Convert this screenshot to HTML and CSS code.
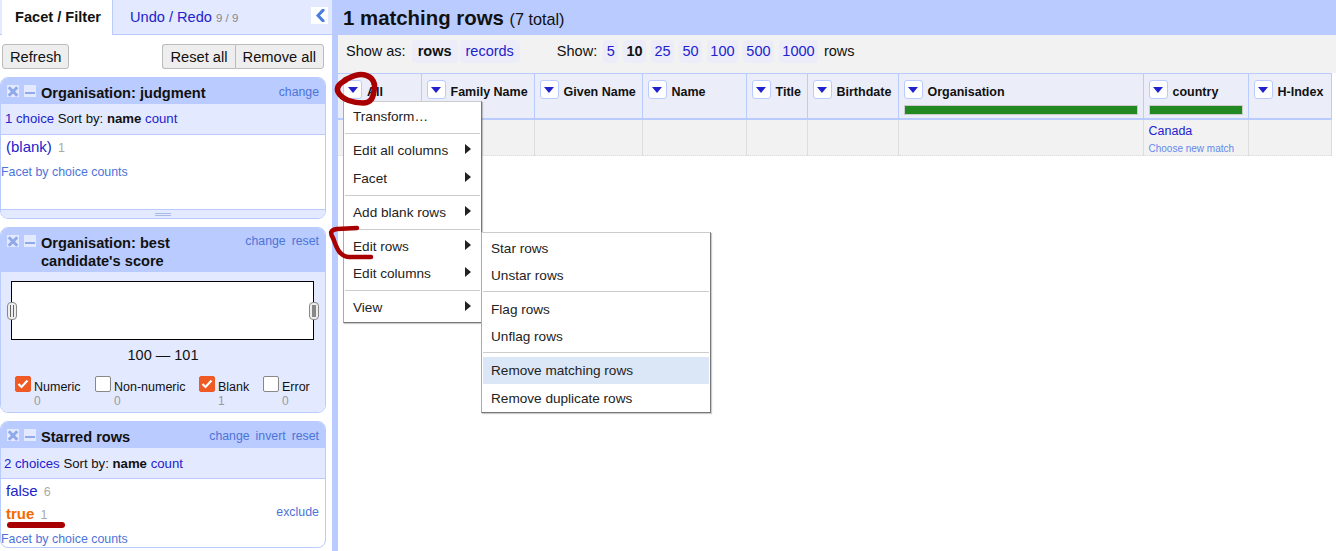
FILE: index.html
```html
<!DOCTYPE html>
<html lang="en">
<head>
  <meta charset="UTF-8">
  <title>OpenRefine</title>
  <link rel="stylesheet" href="styles.css">
</head>
<body>
  <div class="app">
    <aside class="left">
      <div class="tabs">
        <div class="tab active">Facet / Filter</div>
        <div class="tab">Undo / Redo <span class="undo-count">9 / 9</span></div>
        <div class="collapse">
          <svg width="17" height="17" viewBox="0 0 17 17"><path d="M11 2 L5 8.5 L11 15 L13.5 15 L13.5 13 L9 8.5 L13.5 4 L13.5 2 Z" fill="#4a7de0"/></svg>
        </div>
      </div>
      <div class="toolbar">
        <button class="btn">Refresh</button>
        <div class="btn-group">
          <button class="btn">Reset all</button>
          <button class="btn">Remove all</button>
        </div>
      </div>

      <section class="facet facet-judgment">
        <header class="facet-head">
          <span class="icon-x"></span><span class="icon-min"></span>
          <div class="facet-title">Organisation: judgment</div>
          <div class="facet-links"><a>change</a></div>
        </header>
        <div class="facet-controls"><a class="blue">1 choice</a> Sort by: <b>name</b> <a class="blue">count</a></div>
        <div class="facet-body tall">
          <div class="choice"><a class="blue">(blank)</a> <span class="count">1</span></div>
          <a class="by-counts">Facet by choice counts</a>
        </div>
        <div class="resize"><span></span></div>
      </section>

      <section class="facet facet-score">
        <header class="facet-head two-line">
          <span class="icon-x"></span><span class="icon-min"></span>
          <div class="facet-title">Organisation: best<br>candidate's score</div>
          <div class="facet-links"><a>change</a><a>reset</a></div>
        </header>
        <div class="range-body">
          <div class="histogram">
            <span class="handle handle-l"></span>
            <span class="handle handle-r"></span>
          </div>
          <div class="range-label">100 — 101</div>
          <div class="checks">
            <div class="check c1"><span class="box on"><svg width="16" height="16" viewBox="0 0 16 16"><path d="M3.5 8 L6.5 11 L12.5 4.5" fill="none" stroke="#fff" stroke-width="2.2"/></svg></span><span class="check-text">Numeric<i>0</i></span></div>
            <div class="check c2"><span class="box"></span><span class="check-text">Non-numeric<i>0</i></span></div>
            <div class="check c3"><span class="box on"><svg width="16" height="16" viewBox="0 0 16 16"><path d="M3.5 8 L6.5 11 L12.5 4.5" fill="none" stroke="#fff" stroke-width="2.2"/></svg></span><span class="check-text">Blank<i>1</i></span></div>
            <div class="check c4"><span class="box"></span><span class="check-text">Error<i>0</i></span></div>
          </div>
        </div>
      </section>

      <section class="facet facet-starred">
        <header class="facet-head">
          <span class="icon-x"></span><span class="icon-min"></span>
          <div class="facet-title">Starred rows</div>
          <div class="facet-links"><a>change</a><a>invert</a><a>reset</a></div>
        </header>
        <div class="facet-controls"><a class="blue">2 choices</a> Sort by: <b>name</b> <a class="blue">count</a></div>
        <div class="facet-body">
          <div class="choice"><a class="blue">false</a> <span class="count">6</span></div>
          <div class="choice selected"><a class="picked">true</a> <span class="count">1</span><a class="exclude">exclude</a></div>
          <a class="by-counts">Facet by choice counts</a>
        </div>
      </section>
    </aside>

    <main class="right">
      <div class="summary"><b>1 matching rows</b> <span>(7 total)</span></div>
      <div class="viewbar">
        <span class="label">Show as:</span>
        <span class="pill wide current">rows</span><a class="pill wide blue">records</a>
        <span class="label show-label">Show:</span>
        <a class="pill blue">5</a><span class="pill current">10</span><a class="pill blue">25</a><a class="pill blue">50</a><a class="pill blue">100</a><a class="pill blue">500</a><a class="pill blue">1000</a>
        <span class="label rows-label">rows</span>
      </div>
      <table class="grid">
        <colgroup>
          <col class="w83"><col class="w113"><col class="w108"><col class="w104"><col class="w61"><col class="w91"><col class="w245"><col class="w105"><col class="w83">
        </colgroup>
        <thead>
          <tr>
            <th><span class="drop"></span>All</th>
            <th><span class="drop"></span>Family Name</th>
            <th><span class="drop"></span>Given Name</th>
            <th><span class="drop"></span>Name</th>
            <th><span class="drop"></span>Title</th>
            <th><span class="drop"></span>Birthdate</th>
            <th><span class="drop"></span>Organisation<div class="recon-bar"></div></th>
            <th><span class="drop"></span>country<div class="recon-bar"></div></th>
            <th><span class="drop"></span>H-Index</th>
          </tr>
        </thead>
        <tbody>
          <tr>
            <td></td><td></td><td></td><td></td><td></td><td></td><td></td>
            <td><a class="blue">Canada</a><a class="new-match">Choose new match</a></td>
            <td></td>
          </tr>
        </tbody>
      </table>
    </main>
  </div>

  <div class="menu main-menu">
    <div class="item">Transform…</div>
    <hr>
    <div class="item sub">Edit all columns</div>
    <div class="item sub facet-item">Facet</div>
    <hr>
    <div class="item sub">Add blank rows</div>
    <hr>
    <div class="item sub">Edit rows</div>
    <div class="item sub">Edit columns</div>
    <hr>
    <div class="item sub">View</div>
  </div>
  <div class="menu sub-menu">
    <div class="item">Star rows</div>
    <div class="item">Unstar rows</div>
    <hr>
    <div class="item">Flag rows</div>
    <div class="item">Unflag rows</div>
    <hr>
    <div class="item hover">Remove matching rows</div>
    <div class="item dup">Remove duplicate rows</div>
  </div>

  <svg class="scribble" width="1336" height="551" viewBox="0 0 1336 551">
    <g fill="none" stroke="#a80000" stroke-linecap="round" stroke-linejoin="round">
      <path stroke-width="5.5" d="M345 80 C351 77 358 73 365 75 C373 77 376 84 374 91 C373 98 371 103 363 103 C354 103 342 100 338 92 C336 87 340 83 346 80"/>
      <path stroke-width="4.5" d="M357 228 L337 229 C330 230 330 233 333 238 C336 245 338 256 349 257 L371 257"/>
      <path stroke-width="6" d="M10 525 L62 525"/>
    </g>
  </svg>
</body>
</html>
```
FILE: styles.css
```css
* { box-sizing: border-box; }
html, body {
  margin: 0;
  height: 100%;
  overflow: hidden;
}
body {
  font-family: "Liberation Sans", Arial, sans-serif;
  font-size: 13px;
  color: #111;
  background: #fff;
}
a { cursor: pointer; }
.blue { color: #2222cc; }

.app {
  display: flex;
  height: 551px;
}

/* left panel */
.left {
  width: 332px;
  flex: none;
  padding-right: 6px;
}
.tabs {
  display: flex;
  height: 35px;
  margin-right: -6px;
  background: #e3e9ff;
  border-bottom: 1px solid #b9cbff;
  position: relative;
}
.tab {
  padding-top: 9px;
  font-size: 14.6px;
  color: #2222cc;
  padding-left: 17px;
}
.tab.active {
  width: 111px;
  height: 35px;
  margin-left: 2px;
  padding-left: 13px;
  background: #fff;
  color: #111;
  font-weight: bold;
  border-right: 1px solid #b9cbff;
}
.undo-count { font-size: 11.5px; color: #888; }
.collapse {
  position: absolute;
  top: 7px;
  left: 311px;
  width: 17px;
  height: 17px;
  background: #fff;
}
.toolbar {
  display: flex;
  justify-content: space-between;
  padding: 9px 2px 0 2px;
  height: 42px;
}
.btn-group { display: flex; }
.btn {
  height: 25px;
  padding: 0 7px;
  font-family: inherit;
  font-size: 14.7px;
  color: #111;
  background: #eee;
  border: 1px solid #bbb;
  border-radius: 3px;
}
.btn-group .btn:first-child { border-radius: 3px 0 0 3px; border-right: none; }
.btn-group .btn:last-child { border-radius: 0 3px 3px 0; }

.facet {
  margin-bottom: 8px;
  border: 1px solid #b9cbff;
  border-radius: 8px;
  overflow: hidden;
  background: #fff;
}
.facet-head {
  display: flex;
  background: #b9cbff;
  min-height: 26px;
  padding: 6px 6px 0 6px;
}
.facet-head.two-line { height: 44px; }
.icon-x, .icon-min {
  flex: none;
  width: 12px;
  height: 12px;
  margin-right: 5px;
  margin-top: 1px;
  background: #e3e9ff;
  position: relative;
}
.icon-x::before, .icon-x::after {
  content: "";
  position: absolute;
  left: 0;
  top: 4.5px;
  width: 12px;
  height: 3px;
  background: #8fa9ea;
  transform: rotate(45deg);
}
.icon-x::after { transform: rotate(-45deg); }
.icon-min::before {
  content: "";
  position: absolute;
  left: 1px;
  top: 7px;
  width: 10px;
  height: 2px;
  background: #8fa9ea;
}
.facet-title {
  flex: 1;
  font-size: 14.6px;
  font-weight: bold;
  line-height: 18px;
  color: #111;
}
.facet-links {
  font-size: 12.3px;
  color: #4d74d9;
  line-height: 15px;
  padding-top: 1px;
  white-space: nowrap;
}
.two-line .facet-links { padding-top: 0; }
.facet-links a { margin-left: 6px; }
.facet-controls {
  height: 31px;
  padding: 7px 3px 0 3px;
  background: #e3e9ff;
  border-bottom: 1px solid #b9cbff;
  font-size: 13.2px;
  line-height: 15px;
}
.facet-judgment .facet-controls { padding-left: 4px; }
.facet-starred .facet-controls { padding-top: 8px; }
.facet-body { position: relative; height: 68px; }
.facet-body.tall { height: 74px; }
.choice {
  font-size: 15px;
  padding: 3px 5px 0 5px;
  height: 23px;
  position: relative;
}
.facet-judgment .choice { height: 30px; }
.count { font-size: 12.5px; color: #aaa; margin-left: 2px; }
.picked { color: #f26a00; font-weight: bold; }
.exclude {
  position: absolute;
  right: 6px;
  top: 3px;
  font-size: 12.4px;
  color: #4d74d9;
}
.by-counts {
  display: block;
  font-size: 12.4px;
  color: #4d74d9;
}
.facet-starred .by-counts { margin-top: 7px; }
.resize {
  height: 9px;
  background: #e3e9ff;
  border-top: 1px solid #b9cbff;
  display: flex;
  justify-content: center;
  padding-top: 3px;
}
.resize span {
  width: 16px;
  height: 3px;
  border-top: 1px solid #a9b9e3;
  border-bottom: 1px solid #a9b9e3;
}

.range-body {
  background: #e3e9ff;
  height: 140px;
  padding: 9px 0 0 0;
}
.histogram {
  position: relative;
  height: 59px;
  margin: 0 10px;
  width: 303px;
  background: #fff;
  border: 1px solid #000;
}
.handle {
  position: absolute;
  top: 20px;
  width: 10px;
  height: 18px;
  background: #eee;
  border: 1px solid #888;
  border-radius: 4px;
}
.handle::after {
  content: "";
  position: absolute;
  left: 2px;
  top: 2px;
  width: 4px;
  height: 12px;
  background: #888;
}
.handle-l { left: -5px; }
.handle-l::after {
  background: linear-gradient(to right, #666 0 1px, #eee 1px 3px, #666 3px 4px);
}
.handle-r { right: -6px; }
.range-label {
  text-align: center;
  font-size: 14.5px;
  margin-top: 7px;
  line-height: 16px;
}
.checks {
  display: flex;
  margin-top: 13px;
  padding-left: 14px;
}
.check { display: flex; }
.c1 { width: 80px; }
.c2 { width: 104px; }
.c3 { width: 64px; }
.box {
  flex: none;
  width: 16px;
  height: 16px;
  margin-right: 3px;
  background: #fff;
  border: 1px solid #888;
  border-radius: 2px;
  overflow: hidden;
}
.box svg { display: block; margin: -1px; }
.box.on { background: #f05a24; border-color: #f05a24; }
.check-text {
  font-size: 12.5px;
  line-height: 14px;
  padding-top: 4px;
}
.check-text i {
  display: block;
  font-style: normal;
  font-size: 12px;
  color: #999;
}

/* right panel */
.right {
  flex: 1;
  border-left: 6px solid #b9cbff;
}
.summary {
  height: 35px;
  background: #b9cbff;
  padding: 7px 0 0 5px;
  font-size: 20.4px;
}
.summary span { font-size: 16.2px; }
.viewbar {
  display: flex;
  align-items: center;
  height: 38px;
  background: #f2f2f2;
  padding: 0 0 6px 8px;
  font-size: 14.5px;
}
.pill {
  height: 23px;
  line-height: 23px;
  padding: 0 3.5px;
  margin-right: 4.8px;
  border-radius: 4px;
  background: #ecedf8;
}
.pill.wide { padding: 0 6px; margin-right: 2px; }
.pill.current { font-weight: bold; }
.viewbar .label { margin-right: 6px; }
.viewbar .show-label { margin-left: 35px; margin-right: 6px; }
.rows-label { margin-left: 1px; }

.grid {
  table-layout: fixed;
  border-collapse: collapse;
  width: 993px;
}
.w83 { width: 83px; }
.w113 { width: 113px; }
.w108 { width: 108px; }
.w104 { width: 104px; }
.w105 { width: 105px; }
.w61 { width: 61px; }
.w91 { width: 91px; }
.w245 { width: 245px; }
.grid th {
  height: 45px;
  padding: 6px 5px 0 5px;
  background: #ebeef9;
  border: 1px solid #b9cbff;
  border-bottom-width: 2px;
  border-left: none;
  font-size: 12.5px;
  text-align: left;
  vertical-align: top;
  white-space: nowrap;
  line-height: 24px;
}
.drop {
  display: inline-block;
  vertical-align: top;
  width: 19px;
  height: 19px;
  margin-right: 5px;
  background: #fff;
  border: 1px solid #b9cbff;
  border-radius: 3px;
  position: relative;
}
.drop::after {
  content: "";
  position: absolute;
  left: 3.5px;
  top: 6px;
  border-left: 5px solid transparent;
  border-right: 5px solid transparent;
  border-top: 6px solid #2222cc;
}
.recon-bar {
  height: 10px;
  margin-top: 1px;
  background: #228822;
  border: 1px solid #ccc;
}
.grid td {
  height: 37px;
  padding: 4px 5px 0 5px;
  background: #f2f2f2;
  border-right: 1px solid #ddd;
  border-bottom: 1px dotted #ddd;
  vertical-align: top;
  font-size: 12.5px;
}
.new-match {
  display: block;
  font-size: 10px;
  color: #6688ee;
  margin-top: 5px;
}

/* menus sit over the grid */
.menu {
  position: absolute;
  background: #fff;
  border: 1px solid #777;
  border-top-color: #ccc;
  border-left-color: #aaa;
  box-shadow: 1px 1px 1px rgba(0, 0, 0, 0.2);
  padding: 1px;
  font-size: 13.6px;
  color: #222;
}
.main-menu { left: 343px; top: 101px; width: 139px; height: 222px; }
.sub-menu { left: 481px; top: 232px; width: 230px; height: 181px; padding-top: 2px; }
.menu hr {
  height: 1px;
  margin: 3px 0;
  border: none;
  background: #ccc;
}
.sub-menu hr { margin: 2px 0 4px; }
.item {
  height: 27px;
  line-height: 27px;
  padding-left: 8px;
  position: relative;
}
.facet-item { margin-top: 1px; }
.dup { margin-top: 1px; }
.sub::after {
  content: "";
  position: absolute;
  right: 9px;
  top: 7px;
  border-top: 5px solid transparent;
  border-bottom: 5px solid transparent;
  border-left: 6px solid #222;
}
.item.hover { background: #dbe6f6; }

.scribble {
  position: absolute;
  left: 0;
  top: 0;
  pointer-events: none;
}
```
